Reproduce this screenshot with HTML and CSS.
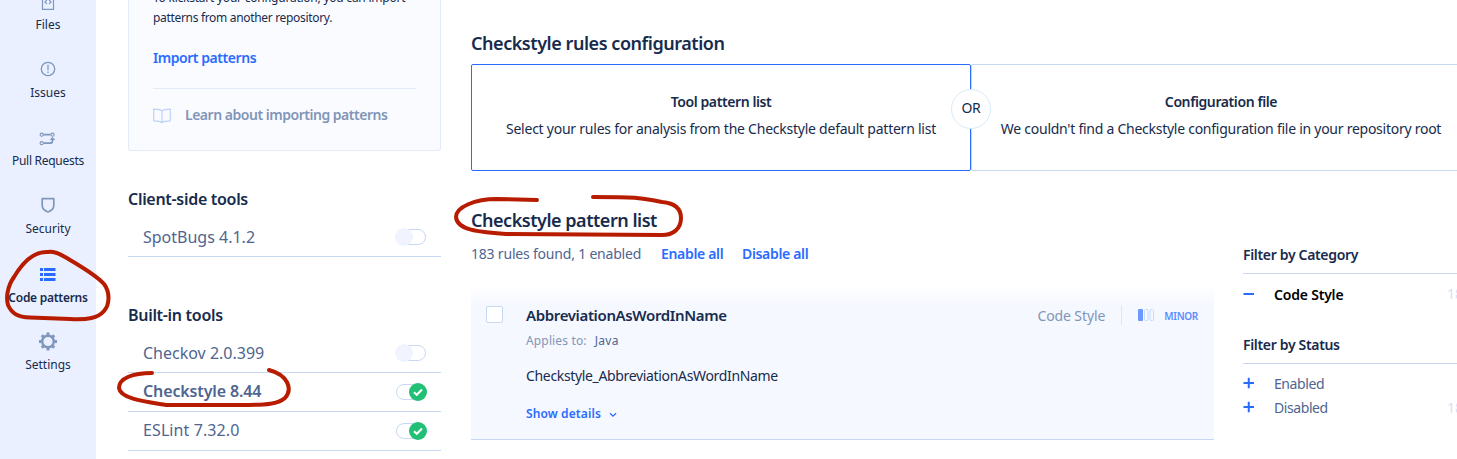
FILE: index.html
```html
<!DOCTYPE html>
<html lang="en">
<head>
<meta charset="utf-8">
<title>Code patterns</title>
<link rel="stylesheet" href="styles.css">
</head>
<body>
<div class="app">
  <nav class="sidebar">
    <a class="nav-item"><span class="nav-icon"><svg width="16" height="18" viewBox="0 0 16 18" fill="none" stroke="#7f97bd" stroke-width="1.2"><path d="M2.500.8h8l3 3v13.500h-11zM6.800 8L5 10l1.800 2M9.200 8l1.800 2-1.800 2"/></svg></span><span class="nav-label files">Files</span></a>
    <a class="nav-item"><span class="nav-icon"><svg width="16" height="16" viewBox="0 0 16 16" fill="none" stroke="#7f97bd" stroke-width="1.300"><circle cx="8" cy="8" r="6.700"/><path d="M8 3.800v5.500M8 10.500v1.500"/></svg></span><span class="nav-label issues">Issues</span></a>
    <a class="nav-item"><span class="nav-icon low"><svg width="18" height="14" viewBox="0 0 18 14" fill="none" stroke="#7f97bd" stroke-width="1.100"><circle cx="2.700" cy="2.700" r="1.600"/><circle cx="13.500" cy="2.700" r="1.600"/><circle cx="2.700" cy="11.200" r="1.600"/><path stroke-width="1.700" d="M4.500 2.700h7M4.500 11.200h6.500q2.500 0 2.500-2.500V7"/><path d="M10.700 8L13.500 5l2.800 3z" fill="#7f97bd" stroke="none"/></svg></span><span class="nav-label pulls">Pull Requests</span></a>
    <a class="nav-item"><span class="nav-icon"><svg width="16" height="18" viewBox="0 0 16 18" fill="none" stroke="#7f97bd" stroke-width="1.700" stroke-linejoin="round"><path d="M2.200 2.600h11.600v6.800c0 3.200-2.600 5.200-5.800 6.600-3.200-1.400-5.800-3.400-5.800-6.600z"/></svg></span><span class="nav-label security">Security</span></a>
    <a class="nav-item active"><span class="nav-icon low"><svg width="16" height="14" viewBox="0 0 16 14" fill="#2a6bff"><path d="M0 0h3v3h-3zM4 0h11.500v3h-11.500zM0 5h3v3h-3zM4 5h11.500v3h-11.500zM0 10h3v3h-3zM4 10h11.500v3h-11.500z"/></svg></span><span class="nav-label patterns">Code patterns</span></a>
    <a class="nav-item"><span class="nav-icon"><svg width="20" height="20" viewBox="0 0 20 20" fill="none" stroke="#7f97bd"><circle cx="10" cy="10.500" r="5.800" stroke-width="2.400"/><path stroke-width="3" d="M10 1.500v2.500M10 17v2.500M1 10.500h2.500M16.500 10.500h2.500M3.800 4.300l1.800 1.800M14.400 14.900l1.800 1.800M3.800 16.700l1.800-1.800M14.400 6.100l1.800-1.800"/></svg></span><span class="nav-label settings">Settings</span></a>
  </nav>

  <aside class="tools">
    <section class="import-card">
      <p class="import-copy"><span class="copy-a">To kickstart your configuration, you can import</span><br><span class="copy-b">patterns from another repository.</span></p>
      <a class="import-link">Import patterns</a>
      <div class="learn">
        <svg width="18" height="16" viewBox="0 0 18 16" fill="none" stroke="#bed0f6" stroke-width="1.200" stroke-linejoin="round"><path d="M9 3.200C7.500 1.500 4 1.200.700 1.200v11.600c3.300 0 6.600.200 8.300 1.800 1.700-1.600 5-1.800 8.300-1.800V1.200C14 1.200 10.500 1.500 9 3.200zM9 3.200v11"/></svg>
        <span>Learn about importing patterns</span>
      </div>
    </section>
    <h3 class="group client">Client-side tools</h3>
    <div class="tool"><span class="t-spot">SpotBugs 4.1.2</span><i class="toggle"></i></div>
    <h3 class="group built">Built-in tools</h3>
    <div class="tool"><span class="t-kov">Checkov 2.0.399</span><i class="toggle"></i></div>
    <div class="tool selected"><span class="t-style">Checkstyle 8.44</span><i class="toggle on"><svg width="18" height="18" viewBox="0 0 18 18"><circle cx="9" cy="9" r="9" fill="#22c075"/><path d="M5 9.200l2.800 2.600L13 6.500" fill="none" stroke="#fff" stroke-width="2"/></svg></i></div>
    <div class="tool"><span class="t-lint">ESLint 7.32.0</span><i class="toggle on"><svg width="18" height="18" viewBox="0 0 18 18"><circle cx="9" cy="9" r="9" fill="#22c075"/><path d="M5 9.200l2.800 2.600L13 6.500" fill="none" stroke="#fff" stroke-width="2"/></svg></i></div>
  </aside>

  <main class="content">
    <h2 class="title conf-title">Checkstyle rules configuration</h2>
    <div class="options">
      <div class="option chosen"><strong class="o-tool">Tool pattern list</strong><span class="o-select">Select your rules for analysis from the Checkstyle default pattern list</span><b class="or">OR</b></div>
      <div class="option"><strong class="o-file">Configuration file</strong><span class="o-missing">We couldn't find a Checkstyle configuration file in your repository root</span></div>
    </div>
    <div class="columns">
      <section class="list">
        <h2 class="title list-title">Checkstyle pattern list</h2>
        <div class="summary"><span class="s-count">183 rules found, 1 enabled</span><a class="s-enable">Enable all</a><a class="s-disable">Disable all</a></div>
        <article class="pattern">
          <i class="checkbox"></i>
          <div class="pattern-body">
            <h4><span class="p-name">AbbreviationAsWordInName</span></h4>
            <p class="applies"><span class="p-applies">Applies to:</span><span class="p-java">Java</span></p>
            <p class="desc"><span class="p-desc">Checkstyle_AbbreviationAsWordInName</span></p>
            <a class="details"><span class="p-details">Show details</span><svg width="8" height="6" viewBox="0 0 8 6" fill="none" stroke="#2a6bff" stroke-width="1.300"><path d="M1 1.200l3 3 3-3"/></svg></a>
          </div>
          <div class="meta"><span class="m-cat">Code Style</span><i class="rule"></i><svg width="17" height="12" viewBox="0 0 17 12"><rect width="5" height="12" rx="1" fill="#6c98ff"/><g fill="none" stroke="#c9dafb"><rect x="6.500" y=".5" width="3.500" height="11" rx="1"/><rect x="12" y=".5" width="3.500" height="11" rx="1"/></g></svg><span class="m-minor">MINOR</span></div>
        </article>
      </section>
      <aside class="filters">
        <h3 class="filter-title"><span class="f-cat">Filter by Category</span></h3>
        <div class="filter current"><svg width="12" height="12" viewBox="0 0 12 12" stroke="#2a6bff" stroke-width="2"><path d="M.5 6h10.500"/></svg><span class="f-style">Code Style</span><em>183</em></div>
        <h3 class="filter-title status"><span class="f-status">Filter by Status</span></h3>
        <div class="filter first"><svg width="12" height="12" viewBox="0 0 12 12" stroke="#2a6bff" stroke-width="2"><path d="M.5 6h10.500M5.750.750v10.500"/></svg><span class="f-on">Enabled</span></div>
        <div class="filter"><svg width="12" height="12" viewBox="0 0 12 12" stroke="#2a6bff" stroke-width="2"><path d="M.5 6h10.500M5.750.750v10.500"/></svg><span class="f-off">Disabled</span><em>182</em></div>
      </aside>
    </div>
  </main>
</div>
<svg class="marks" width="1457" height="459" viewBox="0 0 1457 459" fill="none" stroke="#b81c00" stroke-width="4" stroke-linecap="round" stroke-linejoin="round">
  <path d="M48 252C35 251 23 262 14 277C7 287 6 298 8 305C12 314 18 317 30 317.500L70 319C88 320 98 318 104 311C110 304 110 292 104 284C95 274 75 263 65 257C58 253 53 251 48 252"/>
  <path d="M152 373C133 373 119 378 119 388C120 399 148 402 166 405H240C268 405 278 404 285 398C293 389 288 375 269 370"/>
  <path d="M537 200L497 199C475 199 456 207 456 217C457 230 478 232 506 234L662 235C673 235 681 229 681 218C681 208 674 203 662 202C640 198 645 197 593 197"/>
</svg>
</body>
</html>
```
FILE: styles.css
```css
* { box-sizing: border-box; }
body { margin: 0; width: 1457px; height: 459px; overflow: hidden; position: relative; background: #fff; color: #172b4d; font-family: "Noto Sans", sans-serif; }
h2, h3, h4, p { margin: 0; }
i, em { font-style: normal; }
span, a, strong { white-space: nowrap; }
.app { display: flex; width: 1471px; height: 459px; }

.sidebar { flex: 0 0 96px; background: #eaf0ff; height: 459px; overflow: hidden; display: flex; flex-direction: column; }
.nav-item { flex: 0 0 68px; display: flex; flex-direction: column; align-items: center; }
.nav-item:first-child { margin-top: -20px; }
.nav-icon { height: 44px; display: flex; align-items: center; padding-bottom: 2px; }
.nav-icon.low { padding: 2px 0 0; }
.nav-icon svg { flex: none; }
.nav-label { font-size: 12px; line-height: 18px; margin-top: -8px; }
.active .nav-label { font-weight: 600; margin-top: -7px; }
.active .nav-icon svg { margin-right: 1px; }
.pulls { letter-spacing: -.28px; }
.patterns { letter-spacing: -.27px; }

.tools { flex: 0 0 313px; min-width: 0; margin-left: 32px; }
.import-card { height: 151px; border: 1px solid #e4ebf8; border-top: 0; border-radius: 0 0 3px 3px; background: #fafbff; padding: 0 24px; overflow: hidden; }
.import-copy { font-size: 12px; line-height: 20px; margin-top: -12px; }
.copy-a { letter-spacing: -.24px; }
.copy-b { letter-spacing: -.32px; }
.import-link { display: block; margin-top: 20px; height: 20px; font-size: 14px; line-height: 20px; font-weight: 600; color: #2a6bff; letter-spacing: -.45px; }
.learn { display: flex; align-items: center; gap: 14px; height: 54px; margin-top: 20px; border-top: 1px solid #e4ebf8; color: #8195b8; font-size: 14px; font-weight: 600; letter-spacing: -.48px; }
.learn span { margin-top: -2px; }
.group { font-size: 16px; line-height: 24px; font-weight: 600; letter-spacing: -.3px; }
.client { margin-top: 36px; }
.built { margin-top: 46px; }
.tool { height: 39px; border-bottom: 1px solid #c8d8f2; display: flex; align-items: center; justify-content: space-between; padding: 0 15px; color: #4f6590; font-size: 16px; }
.tool span { margin-top: -2px; }
.client + .tool, .built + .tool { height: 46px; padding-top: 7px; }
.client + .tool span, .built + .tool span { margin-top: 0; }
.selected { font-weight: 600; }
.t-style { letter-spacing: -.13px; }
.t-lint { letter-spacing: .1px; }
.toggle { width: 30px; height: 16px; border: 1px solid #c8d8f2; border-radius: 8px; position: relative; }
.toggle::before { content: ""; position: absolute; left: -2px; top: -2px; width: 18px; height: 18px; border-radius: 50%; background: #f1f4ff; }
.toggle.on::before { display: none; }
.toggle svg { position: absolute; left: 12px; top: -2px; }

.content { width: 1000px; margin-left: 30px; }
.title { font-size: 18px; line-height: 24px; font-weight: 600; }
.conf-title { margin-top: 31px; letter-spacing: -.45px; }
.options { display: flex; height: 107px; margin-top: 9px; }
.option { flex: 0 0 500px; border: 1px solid #c8d8f2; border-radius: 2px; display: flex; flex-direction: column; align-items: center; padding-top: 27px; font-size: 14px; line-height: 20px; gap: 7px; position: relative; }
.option strong { font-weight: 600; letter-spacing: -.4px; }
.o-select { letter-spacing: -.24px; }
.o-missing { letter-spacing: -.26px; }
.option.chosen { border-color: #2a6bff; z-index: 1; }
.or { position: absolute; right: -21px; top: 24px; width: 40px; height: 40px; border: 1px solid #d8eafa; border-radius: 50%; background: #fff; text-align: center; line-height: 36px; font-size: 14px; font-weight: 400; letter-spacing: -.4px; }
.columns { display: flex; gap: 29px; }
.list { flex: 0 0 743px; }
.list-title { margin-top: 37px; letter-spacing: -.47px; }
.summary { display: flex; height: 20px; margin-top: 12px; font-size: 14px; line-height: 20px; color: #4f6590; gap: 20px; }
.summary span { width: 170px; letter-spacing: -.2px; }
.summary a { color: #2a6bff; font-weight: 600; letter-spacing: -.33px; }
.summary .s-enable { width: 61px; }
.pattern { display: flex; height: 155px; margin-top: 21px; padding: 21px 16px 0 15px; border-bottom: 1px solid #c8d8f2; background: linear-gradient(#fff, #f5f8ff 20px); }
.checkbox { width: 17px; height: 17px; border: 1px solid #c8d8f2; border-radius: 2px; background: #fff; }
.pattern-body { margin-left: 23px; flex: 1; }
.pattern h4 { font-size: 15px; line-height: 20px; font-weight: 600; margin-top: -1px; letter-spacing: -.36px; }
.applies { font-size: 12px; line-height: 18px; margin-top: 7px; color: #8195b8; display: flex; gap: 8px; }
.p-applies { letter-spacing: .15px; }
.p-java { color: #4f6590; letter-spacing: .3px; }
.desc { font-size: 14px; line-height: 20px; margin-top: 16px; letter-spacing: -.34px; }
.details { display: flex; align-items: center; gap: 8px; font-size: 12px; line-height: 18px; font-weight: 600; color: #2a6bff; margin-top: 19px; letter-spacing: .12px; }
.details svg { margin-top: 2px; }
.meta { display: flex; align-items: center; height: 20px; margin-top: -1px; color: #8195b8; font-size: 14px; letter-spacing: -.1px; }
.rule { width: 1px; height: 20px; background: #dce6f7; margin: 0 16px 0 16px; }
.m-minor { font-size: 10px; line-height: 14px; font-weight: 600; color: #5b8cff; margin: 2px 0 0 9px; letter-spacing: -.3px; }
.filters { flex: 1; padding-top: 74px; }
.filter-title { height: 29px; border-bottom: 1px solid #c8d8f2; font-size: 14px; line-height: 20px; font-weight: 600; letter-spacing: -.33px; }
.filter { display: flex; align-items: center; height: 24px; color: #4f6590; font-size: 14px; letter-spacing: -.42px; }
.filter svg { margin-right: 19px; }
.filter em { margin-left: auto; color: #d5e0f8; letter-spacing: 0; }
.current { color: #000; font-weight: 600; margin-top: 8px; letter-spacing: -.2px; }
.current em { font-weight: 400; margin-top: -2px; }
.status { margin-top: 29px; }
.first { margin-top: 7px; }

.marks { position: absolute; left: 0; top: 0; pointer-events: none; }
```
